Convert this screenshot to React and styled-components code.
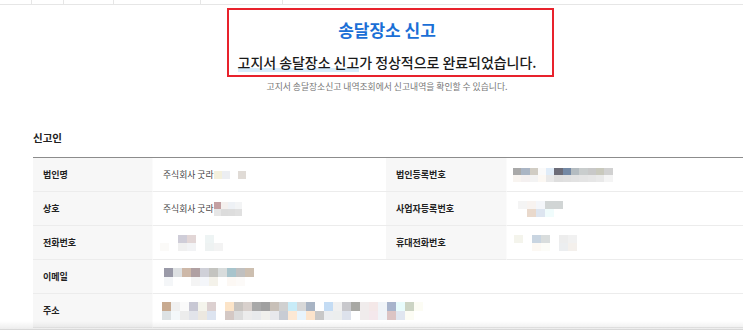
import React from "react";
import styled, { createGlobalStyle } from "styled-components";

const Global = createGlobalStyle`
  html, body { margin: 0; padding: 0; background: #fff; overflow: hidden; }
  body { font-family: "Noto Sans CJK KR", "Noto Sans", sans-serif; color: #222; }
`;

const Page = styled.div`
  width: 743px;
  height: 330px;
  position: relative;
  overflow: hidden;
`;

const TabStrip = styled.div`
  display: flex;
  height: 4px;
  border-bottom: 1px solid #e6e6e6;
`;

const Tab = styled.div`
  width: ${(p) => p.$w}px;
  flex: ${(p) => (p.$w ? "none" : "1")};
  border-right: ${(p) => (p.$w ? "1px solid #e6e6e6" : "none")};
  box-sizing: border-box;
`;

const Container = styled.div`
  margin-left: 33px;
  width: 715px;
`;

const NoticeBox = styled.div`
  box-sizing: border-box;
  width: 327px;
  height: 69px;
  margin: 3px auto 0;
  border: 2px solid #e8222c;
  display: flex;
  flex-direction: column;
  align-items: center;
  padding: 9px 7px 0 0;
`;

const NoticeTitle = styled.div`
  font-size: 17px;
  font-weight: 700;
  color: #1b6fd6;
  line-height: 22px;
`;

const NoticeText = styled.div`
  margin-top: 12px;
  font-size: 14px;
  line-height: 18px;
  color: #1a1a1a;
  font-weight: 500;
  letter-spacing: -0.05px;
`;

const Highlight = styled.span`
  background: linear-gradient(transparent 78%, #d7ecfb 78%);
`;

const SubText = styled.div`
  text-align: center;
  font-size: 8.8px;
  line-height: 12px;
  color: #777;
  margin-top: 4px;
  padding-right: 7px;
`;

const SectionTitle = styled.h3`
  margin: 38px 0 0;
  font-size: 10.5px;
  line-height: 14px;
  font-weight: 700;
  color: #222;
`;

const Table = styled.div`
  margin-top: 12px;
  border-top: 1px solid #8c8c8c;
  display: grid;
  grid-template-columns: 120px 233px 121px 1fr;
`;

const Label = styled.div`
  background: #f7f7f7;
  height: 34px;
  box-sizing: border-box;
  border-bottom: 1px solid #ececec;
  border-right: 1px solid #fbfbfb;
  display: flex;
  align-items: center;
  padding-left: 10px;
  font-size: 9px;
  font-weight: 700;
  color: #222;
`;

const Value = styled.div`
  height: 34px;
  box-sizing: border-box;
  border-bottom: 1px solid #ececec;
  display: flex;
  align-items: center;
  padding-left: ${(p) => p.$pad ?? 10}px;
  font-size: 8.8px;
  color: #444;
  grid-column: ${(p) => (p.$wide ? "2 / 5" : "auto")};
`;

const Mosaic = styled.div`
  display: grid;
  grid-auto-flow: row;
  margin-left: ${(p) => p.$ml || 0}px;
`;

const MRow = styled.div`
  display: flex;
`;

const Cell = styled.span`
  display: block;
  width: ${(p) => p.$w}px;
  height: ${(p) => p.$h}px;
  background: ${(p) => p.$c};
`;

const BottomShade = styled.div`
  position: absolute;
  left: 0;
  right: 0;
  bottom: 0;
  height: 8px;
  background: linear-gradient(rgba(0,0,0,0), rgba(0,0,0,0.07));
  border-bottom: 1px solid #d8d8d8;
  pointer-events: none;
`;

function Blur({ rows, w = 9, h = 9, ml }) {
  return (
    <Mosaic $ml={ml}>
      {rows.map((r, i) => (
        <MRow key={i}>
          {r.map((c, j) => (
            <Cell key={j} $w={w} $h={h} $c={c} />
          ))}
        </MRow>
      ))}
    </Mosaic>
  );
}

const W = "#ffffff";

export default function App() {
  return (
    <Page>
      <Global />
      <TabStrip>
        <Tab $w={32} />
        <Tab $w={32} />
        <Tab $w={50} />
        <Tab $w={87} />
        <Tab $w={82} />
        <Tab />
      </TabStrip>
      <Container>
        <NoticeBox>
          <NoticeTitle>송달장소 신고</NoticeTitle>
          <NoticeText>
            <Highlight>고지서 송달장소 신고</Highlight>가 정상적으로 완료되었습니다.
          </NoticeText>
        </NoticeBox>
        <SubText>고지서 송달장소신고 내역조회에서 신고내역을 확인할 수 있습니다.</SubText>
        <SectionTitle>신고인</SectionTitle>
        <Table>
          <Label>법인명</Label>
          <Value>
            주식회사 굿라
            <Blur
              w={8}
              h={8}
              rows={[["#f4f0dc", "#eceef2", "#ffffff", "#e0dbd6"]]}
            />
          </Value>
          <Label>법인등록번호</Label>
          <Value $pad={6}>
            <Blur
              w={8.3}
              h={7}
              rows={[
                ["#a9a9a9", "#aab5c4", "#d1cdc4", "#fafafa", "#e0ecf8", "#6c6c78", "#7489a5", "#b4bcc1", "#c9cdcd", "#c8c8c8", "#c9c9bd", "#d1d1d1"],
                ["#f8f4f0", "#f4f0f0", "#f3f3f3", "#fcf8f3", "#e9e9e9", "#dedede", "#e0e0e0", "#e2e2e2", "#e4e4e4", "#e6e6e6", "#e9e9e9", "#f4f4f4"],
              ]}
            />
          </Value>

          <Label>상호</Label>
          <Value>
            주식회사 굿라
            <Blur
              w={7}
              h={7}
              rows={[
                ["#c4a0a2", "#f4f0ee", "#eef1f5", "#f3f4f5"],
                ["#e6e6e6", "#dcdcdc", "#dddddd", "#e0e0e0"],
              ]}
            />
          </Value>
          <Label>사업자등록번호</Label>
          <Value $pad={11}>
            <Blur
              w={9}
              h={8}
              rows={[
                ["#f4f4f4", "#f8f3f0", "#f4f6fa", "#d1d5d5", "#d1d5d5"],
                [W, "#e9d9cc", "#dde5f0", "#f0fcfc", W],
              ]}
            />
          </Value>

          <Label>전화번호</Label>
          <Value $pad={7}>
            <Blur
              w={9}
              h={8}
              rows={[
                [W, W, "#cfcdd8", "#e2d6d6", W, "#eef4f4", W],
                ["#fbfaf8", W, "#f0f0f0", "#f2f3f5", W, "#eef2f2", "#f3f3f3"],
              ]}
            />
          </Value>
          <Label>휴대전화번호</Label>
          <Value $pad={7}>
            <Blur
              w={9}
              h={8}
              rows={[
                ["#f4f4ec", W, "#c9d5e1", "#d9dddd", W, "#ededed", "#f1f1f1"],
                [W, W, "#fcf8f3", "#fcfcf8", W, "#eceef0", "#f4f0ec"],
              ]}
            />
          </Value>

          <Label>이메일</Label>
          <Value $wide $pad={11}>
            <Blur
              w={9}
              h={9}
              rows={[
                ["#9a9aa8", "#dde0e2", "#cdb8a8", "#b0a0a2", "#cfd0d8", "#c4c4c0", "#d8dcdc", "#a8c4cc", "#c0c0c0", "#cdbfb0"],
                ["#f4f6f8", W, W, "#f4f4f4", "#f4f6fa", "#f4f2ea", W, "#fcf8f4", "#fcfaf8", W],
              ]}
            />
          </Value>

          <Label>주소</Label>
          <Value $wide $pad={9}>
            <Blur
              w={9}
              h={9}
              rows={[
                ["#c8aa90", "#f0f0f0", "#fafafa", "#c8c8d4", "#f4f4ec", "#dcd0d0", W, "#fce4c8", "#c8c4c0", "#d8d0cc", "#a8a8a8", "#a0a0a0", "#c8c0b8", "#d0d0d0", "#c8ecf8", "#d8d8d8", "#a8b4c4", W, "#c4dcf4", "#f0f0f0", "#c8c8cc", "#a8a8a4", "#f0ecec", "#f4e8e8", "#f0f4f8", "#a8b4cc", "#e8fcfc", "#ccd4c4", "#fcfcf4"],
                ["#dde2e4", "#f4f8fa", "#ececec", "#e2e4ea", "#ece8e0", "#dde4f0", W, "#d4c8c4", "#dcdcdc", "#ececec", "#e8eaec", "#f0f0ec", "#e8e8ec", "#c8ccd4", "#fce8d4", "#e8f4fc", "#fce4cc", "#c8c8c8", "#eceef0", "#eceeee", "#dde2ec", W, "#f0ecec", "#f4e8ec", "#f0f4f8", "#dcc4c4", "#e0e6f0", "#fcfcf4", W],
              ]}
            />
          </Value>
        </Table>
      </Container>
      <BottomShade />
    </Page>
  );
}
